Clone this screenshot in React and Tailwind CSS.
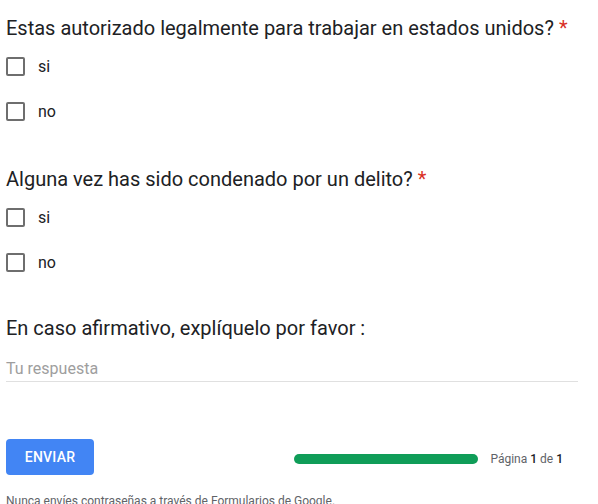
import React from "react";

function Check({ label }) {
  return (
    <label className="flex items-center h-[45px]">
      <span className="w-[19px] h-[19px] border-2 border-[#6e6e6e] rounded-[2px] box-border" />
      <span className="ml-[13px] text-[16px] text-[#202124]">{label}</span>
    </label>
  );
}

function Question({ title, required, gap, children }) {
  return (
    <div className={gap}>
      <div className="text-[20px] leading-[24px] text-[#202124]">
        {title}
        {required && <span className="text-[#d93025] ml-[5px]">*</span>}
      </div>
      <div className="mt-[4px]">{children}</div>
    </div>
  );
}

export default function App() {
  return (
    <div
      className="w-[598px] h-[504px] overflow-hidden bg-white px-[6px] pt-[16px]"
      style={{ fontFamily: "Roboto, 'Noto Sans', Arial, sans-serif" }}
    >
      <Question
        title="Estas autorizado legalmente para trabajar en estados unidos?"
        required
        gap="mb-[33px]"
      >
        <Check label="si" />
        <Check label="no" />
      </Question>
      <Question
        title="Alguna vez has sido condenado por un delito?"
        required
        gap="mb-[31px]"
      >
        <Check label="si" />
        <Check label="no" />
      </Question>
      <div>
        <div className="text-[20px] leading-[24px] text-[#202124]">
          En caso afirmativo, explíquelo por favor :
        </div>
        <div className="mt-[19px] w-[572px] border-b border-[#e0e0e0] pb-[2px] text-[16px] leading-[20px] text-[#9e9e9e]">
          Tu respuesta
        </div>
      </div>
      <div className="mt-[57px] flex items-center">
        <button className="w-[88px] h-[36px] rounded-[4px] bg-[#4285f4] text-white text-[14px] font-medium tracking-[0.25px]">
          ENVIAR
        </button>
        <div className="ml-auto mr-[29px] mt-[4px] flex items-center">
          <div className="w-[184px] h-[10px] rounded-full bg-[#0f9d58]" />
          <div className="ml-[12px] text-[12px] text-[#5f6368]">
            Página <span className="font-medium text-[#202124]">1</span> de{" "}
            <span className="font-medium text-[#202124]">1</span>
          </div>
        </div>
      </div>
      <div className="mt-[17px] text-[12px] text-[#5f6368]">
        Nunca envíes contraseñas a través de Formularios de Google.
      </div>
    </div>
  );
}
